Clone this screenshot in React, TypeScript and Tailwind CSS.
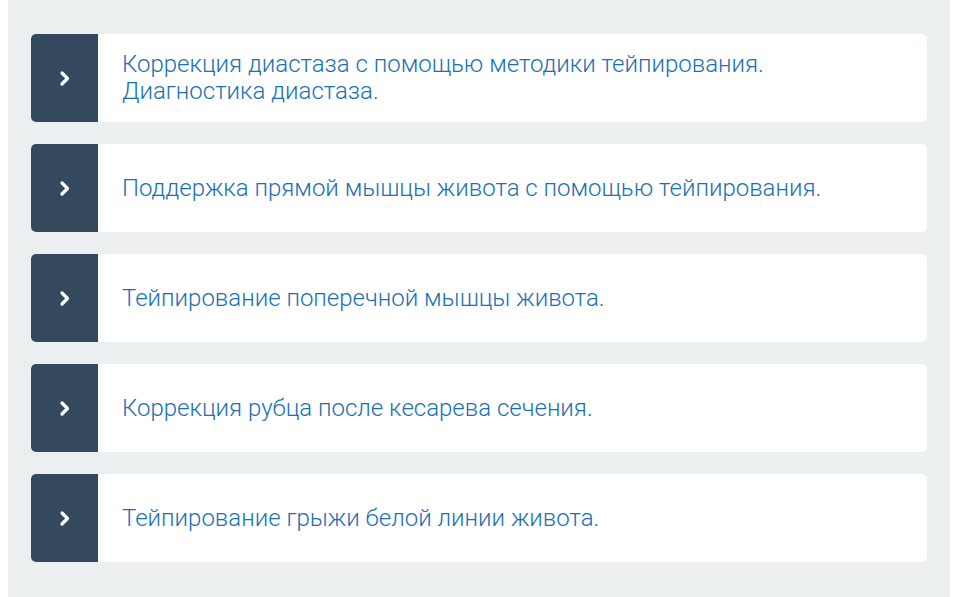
const items = [
  "Коррекция диастаза с помощью методики тейпирования. Диагностика диастаза.",
  "Поддержка прямой мышцы живота с помощью тейпирования.",
  "Тейпирование поперечной мышцы живота.",
  "Коррекция рубца после кесарева сечения.",
  "Тейпирование грыжи белой линии живота.",
]

const Chevron = () => (
  <svg width="12" height="17" viewBox="0 0 12 17" fill="none">
    <polyline points="3,3 8.5,8.5 3,14" stroke="#ffffff" strokeWidth="3.2" strokeLinecap="round" strokeLinejoin="round" />
  </svg>
)

export default function App() {
  return (
    <div className="min-h-screen bg-white px-2" style={{ fontFamily: 'Roboto, "Liberation Sans", sans-serif' }}>
      <div className="bg-[#ebeff0] h-[597px] pt-[34px] px-[23px] flex flex-col gap-[22px]">
        {items.map((text, i) => (
          <div key={text} className="flex h-[88px] rounded-[5px] bg-white overflow-hidden">
            <div className="w-[67px] shrink-0 bg-[#35495e] flex items-center justify-center">
              <Chevron />
            </div>
            <div className="flex items-center pl-6 pr-6 text-[24px] font-light leading-[27px] text-[#1a6fb5]">
              {i === 0 ? (
                <span>
                  Коррекция диастаза с помощью методики тейпирования.
                  <br />
                  Диагностика диастаза.
                </span>
              ) : (
                <span>{text}</span>
              )}
            </div>
          </div>
        ))}
      </div>
    </div>
  )
}
